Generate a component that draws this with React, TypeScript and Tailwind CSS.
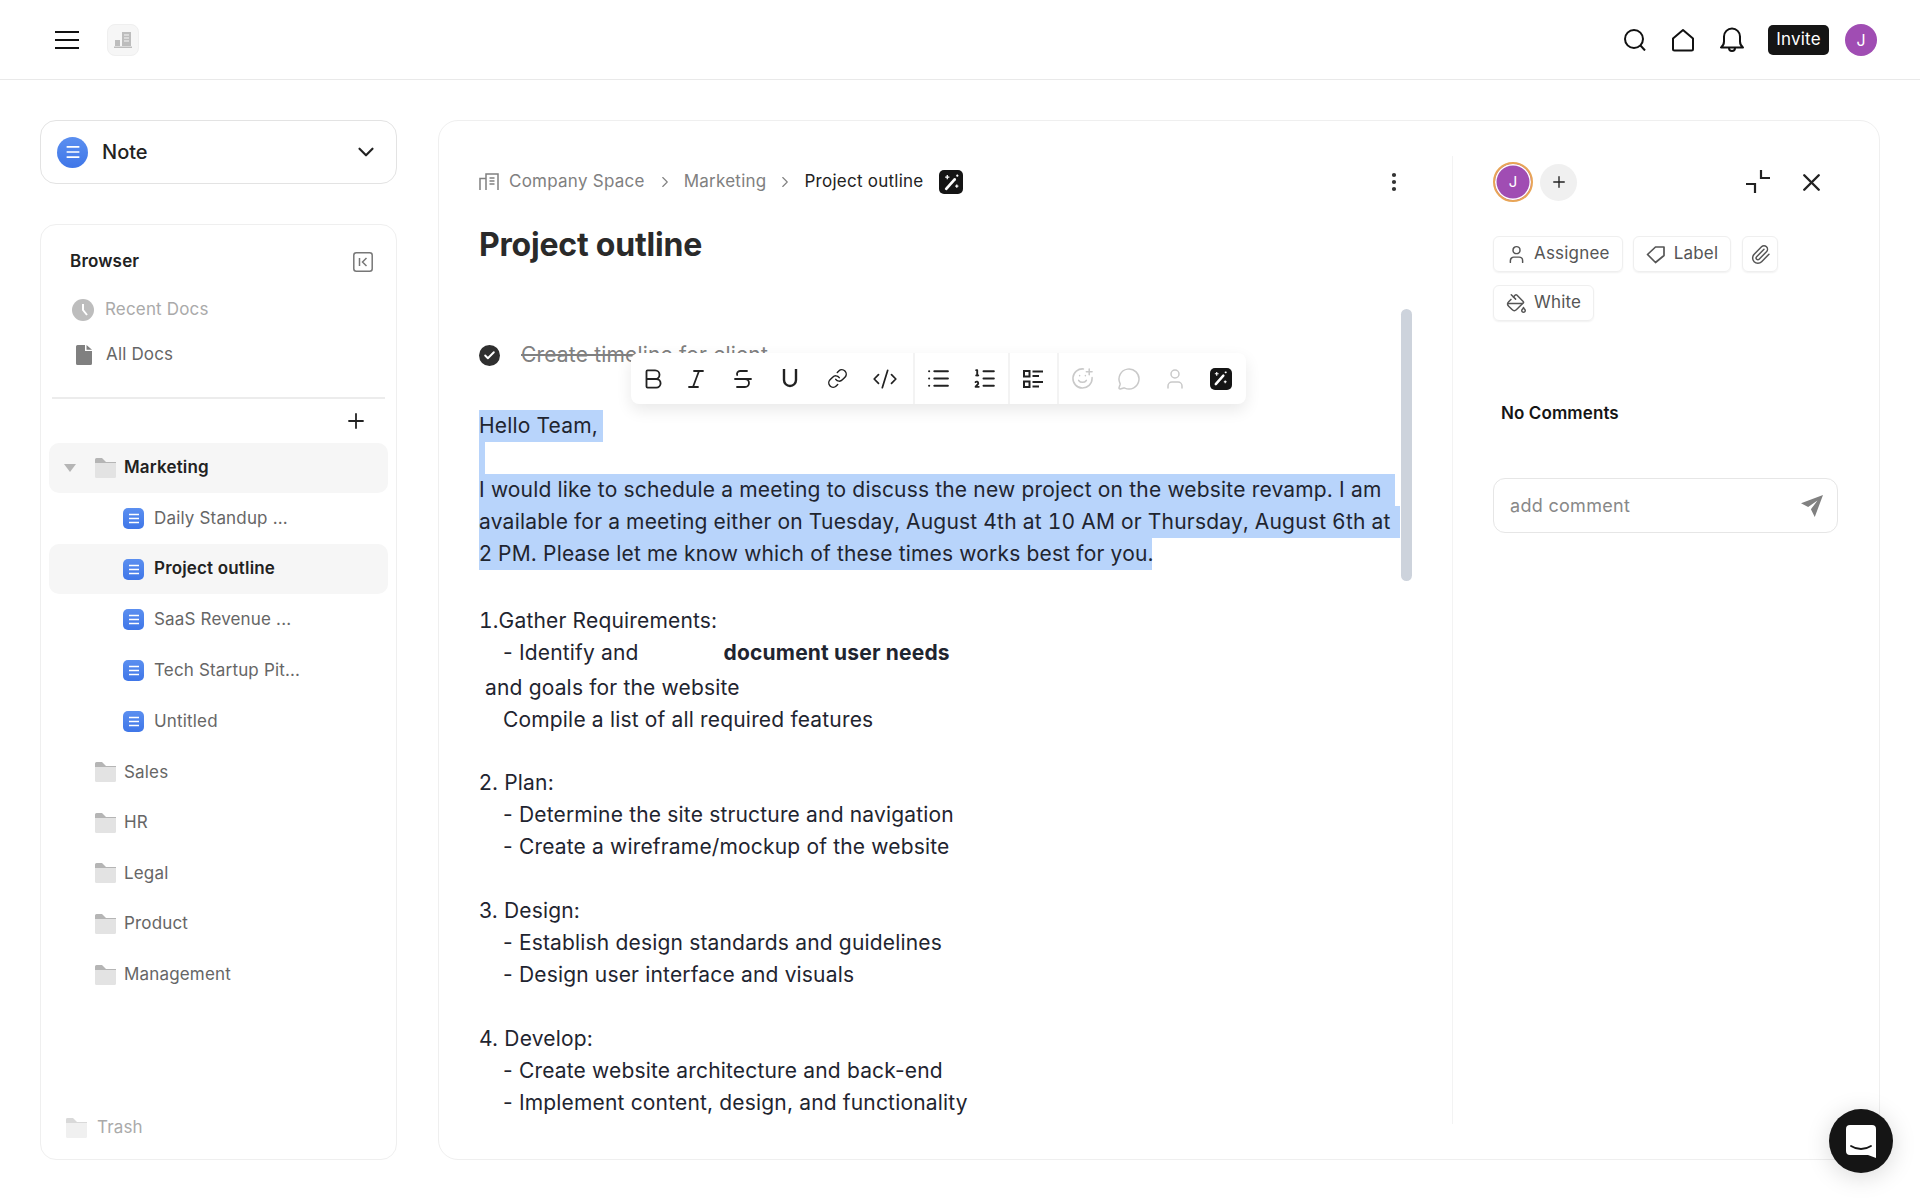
import {
  Bold,
  Check,
  ChevronDown,
  ChevronRight,
  CodeXml,
  EllipsisVertical,
  Italic,
  Link,
  List,
  ListOrdered,
  MessageCircle,
  PaintBucket,
  Paperclip,
  Plus,
  SmilePlus,
  Strikethrough,
  User,
  X,
} from "lucide-react";

const FOLDERS = ["Sales", "HR", "Legal", "Product", "Management"];
const DOCS = ["Daily Standup ...", "Project outline", "SaaS Revenue ...", "Tech Startup Pit...", "Untitled"];

function DocIcon({ round = false }: { round?: boolean }) {
  return (
    <span
      className={`flex items-center justify-center bg-gradient-to-b from-[#5b8ff0] to-[#3f76e8] ${
        round ? "h-[31px] w-[31px] rounded-full" : "h-[21px] w-[21px] rounded-[5px]"
      }`}
    >
      <svg width={round ? 16 : 12} height={round ? 14 : 11} viewBox="0 0 12 11" fill="none" stroke="#fff" strokeWidth="1.3">
        <path d="M1 1.5h10M1 5.5h10M1 9.5h10" />
      </svg>
    </span>
  );
}

function FolderIcon({ faded = false }: { faded?: boolean }) {
  return (
    <svg width="21" height="20" viewBox="0 0 21 20" className={faded ? "opacity-50" : ""}>
      <path d="M0 1.5A1.5 1.5 0 0 1 1.500 0H7l4 4h10v2H0z" fill="#b5b5b5" />
      <path d="M0 5h21v13.500a1.500 1.500 0 0 1-1.500 1.500h-18A1.500 1.500 0 0 1 0 18.500z" fill="#e3e3e3" />
    </svg>
  );
}

function WandIcon({ size = 24 }: { size?: number }) {
  return (
    <span
      style={{ width: size, height: size }}
      className="flex items-center justify-center rounded-[5px] bg-[#151515]"
    >
      <svg width={size - 5} height={size - 5} viewBox="0 0 18 18" fill="none" stroke="#fff">
        <path d="M4 15 12 6" strokeWidth="2.600" strokeLinecap="round" />
        <path d="M5 2v4M3 4h4M14 11v3M12.500 12.500h3M14.500 1.500v2M13.500 2.500h2" strokeWidth="1.200" />
      </svg>
    </span>
  );
}

function TaskListIcon() {
  return (
    <svg width="21" height="20" viewBox="0 0 21 20" fill="none" stroke="#222" strokeWidth="2.200">
      <rect x="1" y="2" width="5.500" height="5.500" strokeWidth="2" />
      <rect x="1" y="12.500" width="5.500" height="5.500" strokeWidth="2" />
      <path d="M9.500 2.500H20M9.500 7H16M9.500 13H20M9.500 17.500H16" />
    </svg>
  );
}

function ToolbarButton({ children, width }: { children: React.ReactNode; width: string }) {
  return <span className={`flex h-full items-center justify-center ${width}`}>{children}</span>;
}

function Toolbar() {
  return (
    <div className="absolute left-[192px] top-[232px] z-10 flex h-[51px] w-[615px] overflow-hidden rounded-[8px] bg-white text-[#222] shadow-[0_6px_16px_rgba(0,0,0,0.09)]">
      <div className="flex w-[284px] items-center border-r-2 border-[#f3f3f3] pl-[2px]">
        <ToolbarButton width="w-[40px]"><Bold size={26} strokeWidth={1.700} /></ToolbarButton>
        <ToolbarButton width="w-[46px]"><Italic size={24} strokeWidth={1.800} /></ToolbarButton>
        <ToolbarButton width="w-[47px]"><Strikethrough size={24} strokeWidth={1.800} /></ToolbarButton>
        <ToolbarButton width="w-[48px]">
          <svg width="16" height="19" viewBox="0 0 16 19" fill="none" stroke="#222" strokeWidth="2.400">
            <path d="M2 0v11a6 6 0 0 0 12 0V0" />
          </svg>
        </ToolbarButton>
        <ToolbarButton width="w-[46px]"><Link size={21} strokeWidth={1.700} /></ToolbarButton>
        <ToolbarButton width="w-[50px]"><CodeXml size={26} strokeWidth={1.600} /></ToolbarButton>
      </div>
      <div className="flex w-[95px] items-center border-r-2 border-[#f3f3f3]">
        <ToolbarButton width="w-[47px]"><List size={25} strokeWidth={2} /></ToolbarButton>
        <ToolbarButton width="w-[45px]"><ListOrdered size={25} strokeWidth={1.800} /></ToolbarButton>
      </div>
      <div className="flex w-[49px] items-center justify-center border-r-2 border-[#f3f3f3]">
        <TaskListIcon />
      </div>
      <div className="flex flex-1 items-center text-[#c9c9c9]">
        <ToolbarButton width="w-[47px]"><SmilePlus size={23} strokeWidth={1.600} /></ToolbarButton>
        <ToolbarButton width="w-[46px]"><MessageCircle size={24} strokeWidth={1.500} /></ToolbarButton>
        <ToolbarButton width="w-[45px]"><User size={24} strokeWidth={1.500} /></ToolbarButton>
        <ToolbarButton width="w-[47px]"><WandIcon size={22} /></ToolbarButton>
      </div>
    </div>
  );
}

function Sidebar() {
  return (
    <aside className="flex w-[357px] shrink-0 flex-col gap-[40px]">
      <div className="flex h-[64px] items-center rounded-[16px] border border-[#e3e3e3] pl-[16px] pr-[17px]">
        <DocIcon round />
        <span className="ml-[14px] flex-1 text-[20px] font-medium text-[#222]">Note</span>
        <ChevronDown size={26} strokeWidth={2} className="text-[#222]" />
      </div>

      <div className="flex flex-1 flex-col rounded-[16px] border border-[#efefef] px-[8px] pt-[19px] pb-[15px] text-[17px] tracking-[0.17px]">
        <div className="flex h-[36px] items-center justify-between pl-[21px] pr-[15px]">
          <span className="font-semibold text-[#222]">Browser</span>
          <svg width="20" height="20" viewBox="0 0 20 20" fill="none" stroke="#777" strokeWidth="1.500">
            <rect x="0.800" y="0.800" width="18.400" height="18.400" rx="2.500" />
            <path d="M6.500 6v8M13.500 6l-4 4 4 4" />
          </svg>
        </div>
        <div className="mt-[7px] flex h-[46px] items-center gap-[11px] pl-[23px] text-[#aaa]">
          <svg width="22" height="22" viewBox="0 0 22 22">
            <circle cx="11" cy="11" r="11" fill="#bdbdbd" />
            <path d="M11 5v6l4 5" fill="none" stroke="#fff" strokeWidth="2" />
          </svg>
          Recent Docs
        </div>
        <div className="flex h-[44px] items-center gap-[14px] pl-[27px] text-[#666]">
          <svg width="16" height="20" viewBox="0 0 16 20">
            <path d="M1.500 0H9v6h7v12.500a1.500 1.500 0 0 1-1.500 1.500h-13A1.500 1.500 0 0 1 0 18.500v-17A1.500 1.500 0 0 1 1.500 0zM10.500 0 16 4.800h-5.500z" fill="#808080" />
          </svg>
          All Docs
        </div>
        <div className="mx-[3px] mt-[20px] h-[2px] bg-[#ececec]" />
        <div className="flex h-[44px] items-center justify-end pr-[20px]">
          <Plus size={24} strokeWidth={1.800} className="text-[#222]" />
        </div>

        <div className="flex h-[50px] items-center rounded-[10px] bg-[#f6f6f6]">
          <svg width="12" height="8" viewBox="0 0 12 8" className="ml-[15px]">
            <path d="M0 0h12L6 8z" fill="#b5b5b5" />
          </svg>
          <span className="ml-[19px]"><FolderIcon /></span>
          <span className="ml-[8px] font-semibold text-[#222]">Marketing</span>
        </div>

        {DOCS.map((doc) =>
          doc === "Project outline" ? (
            <div key={doc} className="flex h-[50px] items-center gap-[10px] rounded-[10px] bg-[#f6f6f6] pl-[74px] font-semibold text-[#222]">
              <DocIcon />
              {doc}
            </div>
          ) : (
            <div key={doc} className="flex h-[51px] items-center gap-[10px] pl-[74px] text-[#666]">
              <DocIcon />
              {doc}
            </div>
          ),
        )}

        {FOLDERS.map((folder) => (
          <div key={folder} className="flex h-[50.600px] items-center gap-[8px] pl-[46px] text-[#666]">
            <FolderIcon />
            {folder}
          </div>
        ))}

        <div className="mt-auto flex h-[32px] items-center gap-[10px] pl-[17px] text-[#aaa]">
          <FolderIcon faded />
          Trash
        </div>
      </div>
    </aside>
  );
}

function Line({ className = "", children }: { className?: string; children?: React.ReactNode }) {
  return <div className={`h-[32px] whitespace-pre text-[21px] leading-[32px] tracking-[0.17px] text-[#1f2530] ${className}`}>{children}</div>;
}

function Editor() {
  return (
    <div className="relative flex-1 pl-[40px]">
      <div className="mt-[46px] flex h-[30px] items-center justify-between pr-[46px]">
        <div className="flex items-center text-[17px] tracking-[0.25px] text-[#808080]">
          <svg width="20" height="20" viewBox="0 0 20 20" fill="none" stroke="#808080" strokeWidth="1.500" className="mr-[10px]">
            <path d="M1 18V6.500h6M7 18V2h12v16M10.500 6h5M10.500 9h5M10.500 12h5" />
          </svg>
          Company Space
          <ChevronRight size={18} strokeWidth={1.500} className="mx-[11px]" />
          <span className="-ml-px">Marketing</span>
          <ChevronRight size={18} strokeWidth={1.500} className="mx-[10px]" />
          <span className="text-[#222]">Project outline</span>
          <span className="ml-[16px]"><WandIcon /></span>
        </div>
        <EllipsisVertical size={24} strokeWidth={2.200} className="text-[#333]" />
      </div>

      <h1 className="mt-[28px] text-[32px] font-bold leading-[40px] tracking-[-0.2px] text-[#2a2a2a]">Project outline</h1>

      <div className="mt-[74px] flex h-[32px] items-center">
        <span className="flex h-[21px] w-[21px] items-center justify-center rounded-full bg-[#2f2f2f]">
          <Check size={13} strokeWidth={3.500} className="text-white" />
        </span>
        <span className="ml-[21px] text-[21px] tracking-[0.17px] text-[#808080] line-through">Create timeline for client</span>
      </div>

      <Line className="mt-[39px] w-[124px] bg-[#b8d4fb]">Hello Team,</Line>
      <Line className="w-[6px] bg-[#b8d4fb]" />
      <Line className="w-[916px] bg-[#b8d4fb]">I would like to schedule a meeting to discuss the new project on the website revamp. I am </Line>
      <Line className="w-[921px] bg-[#b8d4fb]">
        <span className="tabular-nums tracking-[0.22px]">available for a meeting either on Tuesday, August 4th at 10 AM or Thursday, August 6th at </span>
      </Line>
      <Line className="w-[673px] bg-[#b8d4fb]">2 PM. Please let me know which of these times works best for you.</Line>

      <Line className="mt-[35px]"><span className="tabular-nums">1.</span>Gather Requirements:</Line>
      <Line className="pl-[24px]">
        - Identify and<span className="ml-[85px] font-bold">document user needs</span>
      </Line>
      <Line className="mt-[3px] pl-[6px]">and goals for the website</Line>
      <Line className="pl-[24px] tracking-[0.12px]">Compile a list of all required features</Line>

      <Line className="mt-[31px]">2. Plan:</Line>
      <Line className="pl-[24px]">- Determine the site structure and navigation</Line>
      <Line className="pl-[24px]">- Create a wireframe/mockup of the website</Line>

      <Line className="mt-[32px]">3. Design:</Line>
      <Line className="pl-[24px]">- Establish design standards and guidelines</Line>
      <Line className="pl-[24px]">- Design user interface and visuals</Line>

      <Line className="mt-[32px]">4. Develop:</Line>
      <Line className="pl-[24px]">- Create website architecture and back-end</Line>
      <Line className="pl-[24px]">- Implement content, design, and functionality</Line>

      <Toolbar />
      {/* scrollbar thumb */}
      <div className="absolute left-[962px] top-[188px] h-[272px] w-[11px] rounded-full bg-[#cdd3dc]" />
    </div>
  );
}

function Pill({ children, gap = "gap-[8px]" }: { children: React.ReactNode; gap?: string }) {
  return (
    <span className={`flex h-[36px] items-center rounded-[6px] border border-[#efefef] px-[12px] text-[17px] tracking-[0.2px] text-[#555] shadow-[0_1px_2px_rgba(0,0,0,0.06)] ${gap}`}>
      {children}
    </span>
  );
}

function DetailsPanel() {
  return (
    <div className="my-[35px] w-[427px] shrink-0 border-l border-[#f3f3f3] pl-[40px] pr-[40px]">
      <div className="mt-[6px] flex h-[40px] items-center">
        <span className="flex h-[40px] w-[40px] items-center justify-center rounded-full border-2 border-[#e8a557] bg-[#a04db3] text-[15px] text-white shadow-[inset_0_0_0_1.500px_#fff]">
          J
        </span>
        <span className="ml-[7px] flex h-[37px] w-[37px] items-center justify-center rounded-full bg-[#f0f0f0]">
          <Plus size={18} strokeWidth={1.800} className="text-[#222]" />
        </span>
        <span className="ml-auto">
          <svg width="25" height="24" viewBox="0 0 25 24" fill="none" stroke="#222" strokeWidth="2.200">
            <path d="M15 0v8h9M0 14h9v9" />
          </svg>
        </span>
        <X size={29} strokeWidth={2} className="ml-[26px] mr-[13px] text-[#222]" />
      </div>

      <div className="mt-[34px] flex w-[300px] flex-wrap gap-x-[10px] gap-y-[13px]">
        <Pill gap="gap-[7px]"><User size={21} strokeWidth={1.700} />Assignee</Pill>
        <Pill>
          <svg width="20" height="20" viewBox="0 0 20 20" fill="none" stroke="#555" strokeWidth="1.700" strokeLinejoin="round">
            <path d="M1.500 10.500 9.500 3H18v8.500L9.500 18.500z" />
          </svg>
          Label
        </Pill>
        <span className="ml-[1px] flex h-[36px] w-[36px] items-center justify-center rounded-[6px] border border-[#efefef] text-[#555] shadow-[0_1px_2px_rgba(0,0,0,0.06)]">
          <Paperclip size={21} strokeWidth={1.700} />
        </span>
        <Pill gap="gap-[7px]"><PaintBucket size={21} strokeWidth={1.700} />White</Pill>
      </div>

      <p className="ml-[8px] mt-[80px] text-[17px] font-semibold leading-[24px] tracking-[0.1px] text-[#151515]">No Comments</p>

      <div className="mt-[53px] flex h-[55px] w-[345px] items-center justify-between rounded-[12px] border border-[#e6e6e6] pl-[16px] pr-[14px] text-[18px] tracking-[0.3px] text-[#888]">
        add comment
        <svg width="22" height="22" viewBox="0 0 20 20" fill="#808080">
          <path d="M20 0 0 7.500l6.500 3.500L15 5l-6 8 3.500 7z" />
        </svg>
      </div>
    </div>
  );
}

export default function App() {
  return (
    <div className="relative flex h-[1200px] flex-col overflow-hidden bg-white font-[Inter,sans-serif]">
      <header className="flex h-[80px] shrink-0 items-center border-b border-[#e9e9e9] pl-[55px] pr-[43px]">
        <svg width="24" height="20" viewBox="0 0 24 20" stroke="#111" strokeWidth="2.200">
          <path d="M0 2h24M0 10h24M0 18h24" />
        </svg>
        <span className="ml-[28px] flex h-[32px] w-[32px] items-center justify-center rounded-[8px] border border-[#efefef] bg-[#f6f6f6]">
          <svg width="18" height="16" viewBox="0 0 18 16" fill="#bdbdbd">
            <path d="M1 8h5v6H1zM8 0h9v14H8zM0 14.500h18V16H0z" />
            <path d="M10 3h5M10 6h5M10 9h5" stroke="#f6f6f6" />
          </svg>
        </span>
        <div className="ml-auto flex items-center">
          <svg width="22" height="22" viewBox="0 0 22 22" fill="none" stroke="#111" strokeWidth="2">
            <circle cx="10" cy="10" r="9" />
            <path d="m16.500 16.500 4.500 5" />
          </svg>
          <svg width="24" height="24" viewBox="0 0 24 24" fill="none" stroke="#111" strokeWidth="2" strokeLinejoin="round" className="ml-[25px]">
            <path d="M2 10.500 12 2l10 8.500V21a1.500 1.500 0 0 1-1.500 1.500h-17A1.500 1.500 0 0 1 2 21z" />
          </svg>
          <svg width="24" height="25" viewBox="0 0 24 25" fill="none" stroke="#111" strokeWidth="2" className="ml-[25px]">
            <path d="M1 20.500h22c-2-1.500-3-3-3-6V9.500a8 8 0 0 0-16 0v5c0 3-1 4.500-3 6z" strokeLinejoin="round" />
            <path d="M9 21a3 3 0 0 0 6 0" />
          </svg>
          <span className="ml-[24px] flex h-[30px] w-[61px] items-center justify-center rounded-[5px] bg-[#151515] text-[17px] tracking-[0.2px] text-white">Invite</span>
          <span className="ml-[16px] flex h-[32px] w-[32px] items-center justify-center rounded-full bg-[#a04db3] text-[16px] text-white">J</span>
        </div>
      </header>

      <main className="flex flex-1 gap-[41px] p-[40px]">
        <Sidebar />
        <section className="flex flex-1 rounded-[20px] border border-[#efefef]">
          <Editor />
          <DetailsPanel />
        </section>
      </main>

      {/* chat launcher */}
      <div className="absolute bottom-[27px] right-[27px] flex h-[64px] w-[64px] items-center justify-center rounded-full bg-[#151515] shadow-[0_4px_24px_rgba(0,0,0,0.15)]">
        <svg width="30" height="33" viewBox="0 0 30 33">
          <path d="M4 0h22a4 4 0 0 1 4 4v29l-8-3H4a4 4 0 0 1-4-4V4a4 4 0 0 1 4-4z" fill="#fff" />
          <path d="M5 21c6 4 14 4 20 0" fill="none" stroke="#151515" strokeWidth="1.800" strokeLinecap="round" />
        </svg>
      </div>
    </div>
  );
}
